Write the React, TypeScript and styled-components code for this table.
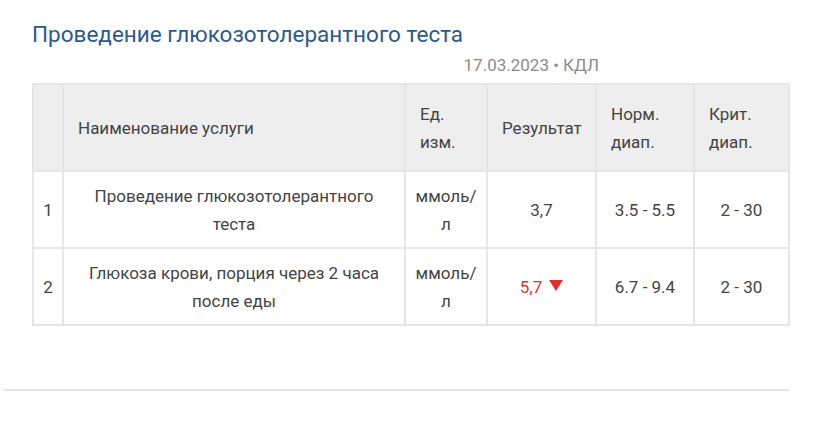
import React from "react";
import styled, { createGlobalStyle } from "styled-components";

const Global = createGlobalStyle`
  html, body { margin: 0; padding: 0; background: #ffffff; }
  body { font-family: Roboto, "Noto Sans", "Liberation Sans", sans-serif; }
`;

const Page = styled.div`
  width: 828px;
  height: 424px;
  display: flex;
  flex-direction: column;
  background: #fff;
`;

const Section = styled.section`
  padding: 19px 39px 0 32px;
  display: flex;
  flex-direction: column;
`;

const Title = styled.h2`
  margin: 0;
  font-size: 22.5px;
  line-height: 30px;
  font-weight: 400;
  color: #2c5a8c;
`;

const Meta = styled.div`
  margin-top: 5px;
  display: flex;
  justify-content: flex-end;
  padding-right: 190px;
  font-size: 17px;
  line-height: 23px;
  color: #8c8c8c;
`;

const Table = styled.table`
  margin-top: 6px;
  width: 756px;
  table-layout: fixed;
  border-collapse: collapse;
  font-size: 17px;
  line-height: 28px;
  color: #444444;
`;

const HeadRow = styled.tr`
  background: #eeeeee;
  height: 87px;
`;

const BodyRow = styled.tr`
  height: 77px;
`;

const Th = styled.th`
  border: 2px solid #e6e6e6;
  padding: 0 8px 0 14px;
  text-align: left;
  font-weight: 400;
  vertical-align: middle;
`;

const Td = styled.td<{ $wide?: boolean }>`
  border: 2px solid #e6e6e6;
  padding: 0 ${(p) => (p.$wide ? "16px" : "8px")};
  text-align: center;
  vertical-align: middle;
`;

const Value = styled.span<{ $low?: boolean }>`
  color: ${(p) => (p.$low ? "#e0322d" : "#444444")};
  display: inline-flex;
  align-items: center;
  gap: 7px;
`;

const Arrow = styled.svg`
  width: 14px;
  height: 11px;
  margin-top: -3px;
`;

const Divider = styled.hr`
  margin: 63px 0 0 4px;
  width: 785px;
  border: none;
  height: 2px;
  background: #e4e4e4;
`;

type Row = {
  n: number;
  name: string;
  result: string;
  low?: boolean;
  norm: string;
  crit: string;
};

const rows: Row[] = [
  { n: 1, name: "Проведение глюкозотолерантного теста", result: "3,7", norm: "3.5 - 5.5", crit: "2 - 30" },
  { n: 2, name: "Глюкоза крови, порция через 2 часа после еды", result: "5,7", low: true, norm: "6.7 - 9.4", crit: "2 - 30" },
];

export default function App() {
  return (
    <Page>
      <Global />
      <Section>
        <Title>Проведение глюкозотолерантного теста</Title>
        <Meta>17.03.2023 • КДЛ</Meta>
        <Table>
          <colgroup>
            <col style={{ width: 30 }} />
            <col style={{ width: 342 }} />
            <col style={{ width: 82 }} />
            <col style={{ width: 109 }} />
            <col style={{ width: 98 }} />
            <col style={{ width: 95 }} />
          </colgroup>
          <thead>
            <HeadRow>
              <Th />
              <Th>Наименование услуги</Th>
              <Th>Ед. изм.</Th>
              <Th>Результат</Th>
              <Th>Норм. диап.</Th>
              <Th>Крит. диап.</Th>
            </HeadRow>
          </thead>
          <tbody>
            {rows.map((r) => (
              <BodyRow key={r.n}>
                <Td>{r.n}</Td>
                <Td $wide>{r.name}</Td>
                <Td>
                  ммоль/<wbr />л
                </Td>
                <Td>
                  <Value $low={r.low}>
                    {r.result}
                    {r.low && (
                      <Arrow viewBox="0 0 14 11">
                        <path d="M0 0 H14 L7 11 Z" fill="#e0322d" />
                      </Arrow>
                    )}
                  </Value>
                </Td>
                <Td>{r.norm}</Td>
                <Td>{r.crit}</Td>
              </BodyRow>
            ))}
          </tbody>
        </Table>
      </Section>
      <Divider />
    </Page>
  );
}
